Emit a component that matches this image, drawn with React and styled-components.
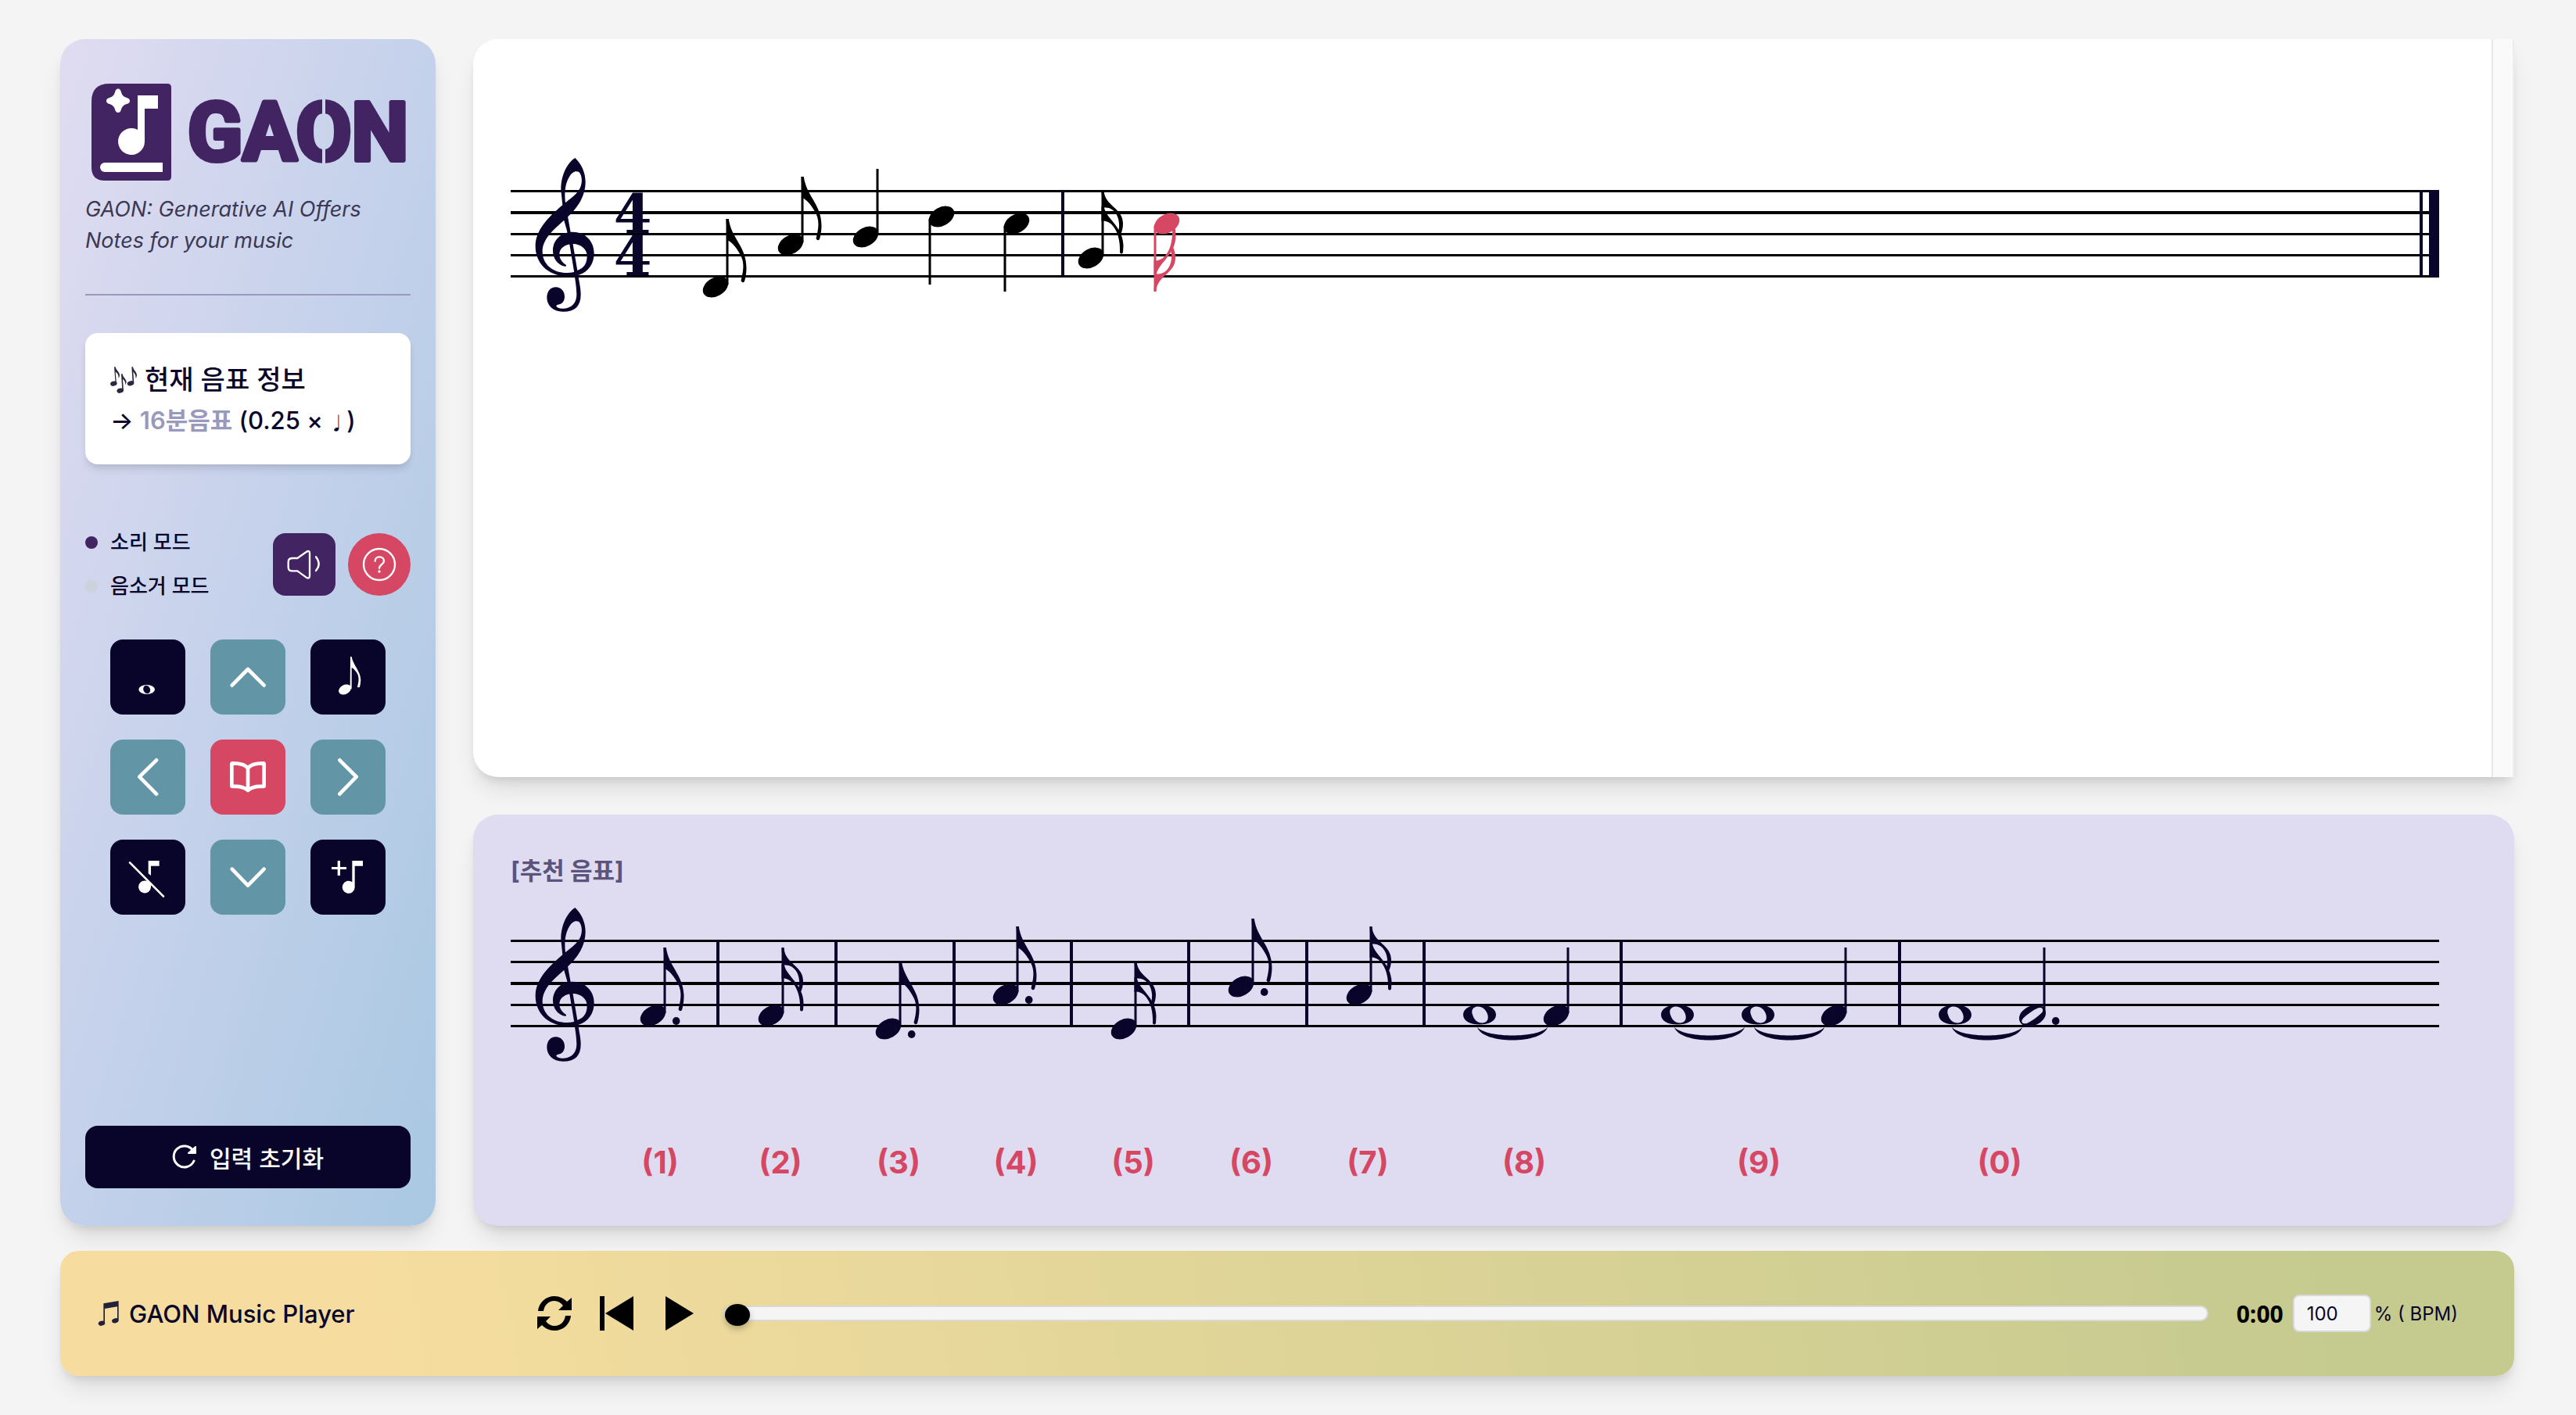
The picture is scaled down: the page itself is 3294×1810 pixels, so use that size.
import React, { useState } from "react";
import styled, { createGlobalStyle, css } from "styled-components";

const INK = "#09042a";
const PURPLE = "#432462";
const RED = "#d64763";
const TEAL = "#6296a7";

const scoreNotes = [
  { type: "eighth", x: 262, y: 122 },
  { type: "eighth", x: 358, y: 68 },
  { type: "quarter", x: 454, y: 58 },
  { type: "quarter", x: 551, y: 32, down: true },
  { type: "quarter", x: 647, y: 41, down: true },
  { type: "sixteenth", x: 742, y: 85 },
  { type: "sixteenth", x: 839, y: 41, down: true, color: RED },
];

const recommendations = [
  { key: 1, label: 191, bar: 265, notes: [{ type: "eighth", x: 182, y: 95, dot: true }] },
  { key: 2, label: 345, bar: 416, notes: [{ type: "sixteenth", x: 333, y: 95 }] },
  { key: 3, label: 496, bar: 567, notes: [{ type: "eighth", x: 483, y: 112, dot: true }] },
  { key: 4, label: 646, bar: 717, notes: [{ type: "eighth", x: 633, y: 68, dot: true }] },
  { key: 5, label: 796, bar: 867, notes: [{ type: "sixteenth", x: 784, y: 112 }] },
  { key: 6, label: 947, bar: 1018, notes: [{ type: "eighth", x: 934, y: 58, dot: true }] },
  { key: 7, label: 1096, bar: 1168, notes: [{ type: "sixteenth", x: 1085, y: 68 }] },
  {
    key: 8,
    label: 1296,
    bar: 1420,
    ties: [1237],
    notes: [
      { type: "whole", x: 1239, y: 95 },
      { type: "quarter", x: 1337, y: 95 },
    ],
  },
  {
    key: 9,
    label: 1596,
    bar: 1776,
    ties: [1489, 1591],
    notes: [
      { type: "whole", x: 1492, y: 95 },
      { type: "whole", x: 1595, y: 95 },
      { type: "quarter", x: 1692, y: 95 },
    ],
  },
  {
    key: 0,
    label: 1904,
    ties: [1844],
    notes: [
      { type: "whole", x: 1847, y: 95 },
      { type: "half", x: 1946, y: 95, dot: true },
    ],
  },
];

const StaffLines = ({ thick }) => (
  <g fill="#000">
    {[0, 27, 55, 82, 109].map((y, i) => (
      <rect key={y} x="0" y={i === thick && i === 2 ? 54 : y} width="2466" height={i === thick ? 4 : 3} />
    ))}
  </g>
);

const Clef = () => (
  <g transform="translate(-33 -63) scale(0.33333)" fill={INK}>
    <path
      fillRule="evenodd"
      d="M346 66C370 88 386 122 386 158C386 212 358 256 310 300C258 345 221 380 221 425C221 475 262 508 318 507C332 507 345 505 354 498C380 490 392 472 392 442C392 416 368 396 338 396C310 396 286 412 286 436C286 455 298 468 312 477Q313 483 306 482C278 476 261 450 261 422C261 378 296 350 336 350C386 350 419 386 419 432C419 478 388 514 345 518L310 519C240 518 194 468 194 405C194 345 240 296 298 247L292 190C291 130 318 84 346 66ZM309 238C304 200 309 165 322 142C335 116 356 112 365 125C376 145 373 172 359 192C345 211 328 222 309 238Z"
    />
    <path d="M302 300L318 290L329 352L338 398L355 498C362 545 368 565 368 590C368 635 345 656 300 656C260 656 238 630 238 602C238 578 252 562 272 562C292 562 306 578 306 598C306 616 296 626 286 628C276 630 272 633 275 637C280 643 290 645 302 644C335 642 352 620 352 590C352 560 344 520 342 500L325 398L315 345Z" />
  </g>
);

const Note = ({ type, x, y, down, dot, color = INK }) => {
  const flip = down ? "translate(-30 0) scale(1 -1)" : undefined;
  if (type === "whole") {
    return (
      <path
        transform={`translate(${x} ${y + 1})`}
        fill={color}
        fillRule="evenodd"
        d="M0 -12.5C12 -12.5 21 -8 21 0C21 8 12 12.5 0 12.5C-12 12.5 -21 8 -21 0C-21 -8 -12 -12.5 0 -12.5ZM-3 -10.5C-9 -10 -11 -5 -9 0C-7 7 -2 11 4 10.5C10 10 12 5 10 -1C8 -7 3 -11 -3 -10.5Z"
      />
    );
  }
  return (
    <g transform={`translate(${x} ${y + 2})`} fill={color}>
      {type === "half" ? (
        <path
          fillRule="evenodd"
          d="M4 -13.5C12 -14 17 -10 17 -3C17 6 5 14 -4 14C-12 14 -17 10 -17 4C-17 -6 -5 -13 4 -13.5ZM9 -10C3 -9 -12 2 -13.5 6C-14.5 10 -11 11 -7 10C0 7 11 -2 13 -5C14 -9 12 -10 9 -10Z"
        />
      ) : (
        <ellipse rx="17.5" ry="11.7" transform="rotate(-30)" />
      )}
      <g transform={flip}>
        <rect x="13.5" y="-87" width="3" height="84" />
        {type === "eighth" && (
          <path d="M13.5 -87H16.8C20 -62 39.5 -52 39.5 -24C39.5 -17 38 -11 37 -7Q34.500 -4 32.500 -8C37 -25 36.500 -34 30 -44C26 -51 21 -57 15 -60Z" />
        )}
        {type === "sixteenth" && (
          <>
            <path d="M13.5 -86H16.5C18 -66 41 -64 41 -44C41 -38 39.500 -33 37.500 -29L35 -34C39 -48 32 -65 18 -64.500L15 -64Z" />
            <path d="M13.5 -66L17 -64C20 -50 41 -40 41.500 -16L41 -7Q39 -4 37 -7C38 -25 32 -45 17 -47.500L13.5 -47Z" />
          </>
        )}
      </g>
      {dot && <ellipse cx="29.700" cy="7" rx="4.800" ry="5" />}
    </g>
  );
};

const Tie = ({ x }) => (
  <path
    fill={INK}
    d={`M${x - 1} 112C${x + 12} 126 ${x + 76} 126 ${x + 89} 112C${x + 82} 134 ${x + 6} 134 ${x - 1} 112Z`}
  />
);

const Logo = () => (
  <LogoArt viewBox="0 0 416 150" role="img" aria-label="GAON">
    <path
      fill={PURPLE}
      d="M31 9H105Q110 9 110 14V128Q110 133 105 133H25Q8 133 8 116V32Q8 9 31 9Z"
    />
    <path
      fill="#fff"
      d="M42 15.500Q45 15.500 46 20Q47.500 25.500 53 27Q57 28 57 31Q57 34 53 35Q47.500 36.500 46 42Q45 46 42 46Q39 46 38 42Q36.500 36.500 31 35Q27 34 27 31Q27 28 31 27Q36.500 25.500 38 20Q39 15.500 42 15.500Z"
    />
    <path fill="#fff" d="M67 24H93V41H76V83A17 17 0 1 1 67 68Z" />
    <path fill="#fff" d="M25 110H99V122H25A6 6 0 0 1 25 110Z" />
    <LogoText x="131" y="107">
      GAON
    </LogoText>
    <rect x="303" y="24" width="4" height="90" fill="#ccd6eb" />
  </LogoArt>
);

const TripleNoteIcon = () => (
  <svg width="34" height="34" viewBox="0 0 102 102" fill="#2b2940" aria-hidden="true">
    <ellipse cx="13" cy="65" rx="13" ry="9" transform="rotate(-15 13 65)" />
    <path d="M15 1H20C22 14 34 18 36 32Q36 38 32 44Q32 26 20 20L24 65H20Z" />
    <ellipse cx="38" cy="92" rx="13" ry="9" transform="rotate(-15 38 92)" />
    <path d="M42 28H47C49 42 60 46 62 58Q62 64 58 70Q58 54 48 48L51 92H46Z" />
    <ellipse cx="78" cy="64" rx="13" ry="9" transform="rotate(-15 78 64)" />
    <path d="M82 1H87C89 14 100 18 102 32Q102 38 98 46Q98 28 88 20L91 64H86Z" />
  </svg>
);

const BeamedNoteIcon = () => (
  <svg width="28" height="32" viewBox="0 0 84 96" fill="#23203c" aria-hidden="true">
    <path d="M22 10L80 0V74H75V22L27 30V86H22Z" />
    <ellipse cx="15" cy="86" rx="13" ry="9" transform="rotate(-15 15 86)" />
    <ellipse cx="67" cy="76" rx="13" ry="9" transform="rotate(-15 67 76)" />
  </svg>
);

const icons = {
  whole: (
    <g stroke="none">
      <ellipse cx="140" cy="192" rx="31" ry="18" fill="#fff" />
      <ellipse cx="140" cy="192" rx="13" ry="16" transform="rotate(-25 140 192)" fill={INK} />
    </g>
  ),
  up: <polyline points="83,176 144,114 206,176" />,
  eighth: (
    <g fill="#fff" stroke="none">
      <ellipse cx="132" cy="192" rx="25" ry="18" transform="rotate(-28 132 192)" />
      <path d="M153 66H158C162 96 193 122 193 157Q192 172 189 182Q184 186 180 182C187 156 187 140 175 124Q168 113 158 107V190H152Z" />
    </g>
  ),
  left: <polyline points="177,79 112,143 177,209" />,
  book: (
    <path d="M144 110C134 95 112 91 85 91Q82 91 82 95V177Q82 180 85 180C112 178 132 184 144 195C156 184 176 178 203 180Q206 180 206 177V95Q206 91 203 91C176 91 154 95 144 110V192" />
  ),
  right: <polyline points="112,79 176,143 112,209" />,
  mute: (
    <>
      <g fill="#fff" stroke="none">
        <path d="M146 81H188V101H156V138L146 130Z" />
        <path d="M156 182A24 24 0 1 1 143 160L156 172Z" />
      </g>
      <line x1="75" y1="88" x2="204" y2="218" strokeWidth="8" />
    </>
  ),
  down: <polyline points="83,113 144,176 206,113" />,
  add: (
    <g fill="#fff" stroke="none">
      <path d="M104 81H114V105H138V114H114V138H104V114H81V105H104Z" />
      <path d="M160 81H201V101H170V182A24 24 0 1 1 160 163Z" />
    </g>
  ),
};

const keypad = [
  { icon: "whole", tone: INK, name: "온음표" },
  { icon: "up", tone: TEAL, name: "위로" },
  { icon: "eighth", tone: INK, name: "8분음표" },
  { icon: "left", tone: TEAL, name: "왼쪽" },
  { icon: "book", tone: RED, name: "악보" },
  { icon: "right", tone: TEAL, name: "오른쪽" },
  { icon: "mute", tone: INK, name: "음표 삭제" },
  { icon: "down", tone: TEAL, name: "아래로" },
  { icon: "add", tone: INK, name: "음표 추가" },
];

const Sidebar = () => (
  <SidePanel>
    <header>
      <Logo />
      <Tagline>GAON: Generative AI Offers Notes for your music</Tagline>
    </header>
    <Divider />
    <InfoCard>
      <InfoTitle>
        <TripleNoteIcon />
        현재 음표 정보
      </InfoTitle>
      <InfoText>
        → <strong>16분음표</strong> (0.25 × <small>♩</small>)
      </InfoText>
    </InfoCard>
    <ModeRow>
      <ModeList>
        <Mode $active>소리 모드</Mode>
        <Mode>음소거 모드</Mode>
      </ModeList>
      <RoundButtons>
        <ToolButton type="button" $tone={PURPLE} aria-label="소리">
          <svg viewBox="0 0 240 240" strokeWidth="7">
            <path d="M94 96L128 72Q141 64 141 77V163Q141 177 128 170L94 145H75Q59 145 59 131V110Q59 96 75 96Z" />
            <path d="M165 91Q187 119 165 144" />
          </svg>
        </ToolButton>
        <ToolButton type="button" $tone={RED} $round aria-label="도움말">
          <svg viewBox="0 0 240 240" strokeWidth="7">
            <circle cx="120" cy="120" r="60" />
            <path d="M104 107C104 97 111 91 120 91C131 91 138 98 138 107C138 119 120 121 120 134" />
            <circle cx="120" cy="147" r="5" fill="#fff" stroke="none" />
          </svg>
        </ToolButton>
      </RoundButtons>
    </ModeRow>
    <Keypad>
      {keypad.map((item) => (
        <KeyButton key={item.icon} type="button" $tone={item.tone} aria-label={item.name}>
          <svg viewBox="0 0 288 288" strokeWidth="14">
            {icons[item.icon]}
          </svg>
        </KeyButton>
      ))}
    </Keypad>
    <ResetButton type="button">
      <svg width="32" height="32" viewBox="0 0 32 32" fill="none" stroke="#fff" strokeWidth="3" strokeLinecap="round" aria-hidden="true">
        <path d="M28 21A13.500 13.500 0 1 1 27 8" />
        <path d="M30 3V11H21Z" fill="#fff" strokeWidth="2" strokeLinejoin="round" />
      </svg>
      입력 초기화
    </ResetButton>
  </SidePanel>
);

const Score = () => (
  <ScorePanel>
    <ScoreBody>
      <Sheet viewBox="0 0 2466 360" role="img" aria-label="악보">
        <g transform="translate(0 145)">
          <StaffLines thick={1} />
          <Clef />
          <TimeSignature>
            <tspan x="156" y="55">4</tspan>
            <tspan x="156" y="109">4</tspan>
          </TimeSignature>
          {scoreNotes.map((note) => (
            <Note key={note.x} color="#000" {...note} />
          ))}
          <rect x="704" y="1" width="4" height="109" fill={INK} />
          <rect x="2441" y="0" width="4" height="111" fill={INK} />
          <rect x="2453" y="0" width="13" height="111" fill={INK} />
        </g>
      </Sheet>
    </ScoreBody>
    <ScrollTrack />
  </ScorePanel>
);

const Recommend = () => (
  <RecommendPanel>
    <RecommendTitle>[추천 음표]</RecommendTitle>
    <Sheet viewBox="0 0 2466 382" role="img" aria-label="추천 음표">
      <g transform="translate(0 64)">
        <StaffLines thick={2} />
        <Clef />
        {recommendations.map((item) => (
          <g key={item.key}>
            {item.notes.map((note) => (
              <Note key={note.x} {...note} />
            ))}
            {item.ties && item.ties.map((x) => <Tie key={x} x={x} />)}
            {item.bar && <rect x={item.bar - 2} y="1" width="4" height="109" fill={INK} />}
            <NoteLabel x={item.label} y="299">
              ({item.key})
            </NoteLabel>
          </g>
        ))}
      </g>
    </Sheet>
  </RecommendPanel>
);

const Player = () => {
  const [position, setPosition] = useState(0);
  const [tempo, setTempo] = useState("100");

  return (
    <PlayerBar>
      <PlayerTitle>
        <BeamedNoteIcon />
        GAON Music Player
      </PlayerTitle>
      <PlayerButton type="button" aria-label="반복">
        <svg width="46" height="46" viewBox="0 0 46 46">
          <path d="M2 20C3 9 12 1 23 1C30 1 35 4 39 8L45 3V19H28L34 13C31 9 27 7 23 7C15 7 10 13 9 20Z" />
          <path d="M44 26C43 37 34 45 23 45C16 45 11 42 7 38L1 43V27H18L12 33C15 37 19 39 23 39C31 39 36 33 37 26Z" />
        </svg>
      </PlayerButton>
      <PlayerButton type="button" aria-label="처음으로">
        <svg width="44" height="44" viewBox="0 0 44 44">
          <path d="M0 0H6V44H0ZM43 0V44L7 22Z" />
        </svg>
      </PlayerButton>
      <PlayerButton type="button" aria-label="재생">
        <svg width="36" height="44" viewBox="0 0 36 44">
          <path d="M0 0L36 22L0 44Z" />
        </svg>
      </PlayerButton>
      <Progress
        type="range"
        min="0"
        max="100"
        value={position}
        onChange={(e) => setPosition(Number(e.target.value))}
        aria-label="재생 위치"
      />
      <Clock>0:00</Clock>
      <TempoLabel>
        <TempoInput value={tempo} onChange={(e) => setTempo(e.target.value)} />
        % ( BPM)
      </TempoLabel>
    </PlayerBar>
  );
};

const App = () => (
  <>
    <GlobalStyle />
    <Page>
      <Workspace>
        <Sidebar />
        <Content>
          <Score />
          <Recommend />
        </Content>
      </Workspace>
      <Player />
    </Page>
  </>
);

const GlobalStyle = createGlobalStyle`
  * {
    box-sizing: border-box;
    margin: 0;
    padding: 0;
  }
  body {
    background-color: #f4f4f4;
    color: ${INK};
    font-family: Inter, "Noto Sans CJK KR", sans-serif;
  }
  button, input {
    font: inherit;
    color: inherit;
    border: none;
  }
  button {
    cursor: pointer;
  }
`;

const panelShadow = css`
  box-shadow: 0 20px 30px -6px rgba(0, 0, 0, 0.1), 0 8px 12px -4px rgba(0, 0, 0, 0.1);
`;

const Page = styled.div`
  display: flex;
  flex-direction: column;
  gap: 32px;
  min-height: 100vh;
  padding: 50px 79px 50px 77px;
`;

const Workspace = styled.main`
  flex: 1;
  display: flex;
  gap: 48px;
`;

const SidePanel = styled.aside`
  flex: 0 0 480px;
  display: flex;
  flex-direction: column;
  padding: 48px 32px;
  border-radius: 32px;
  background: linear-gradient(to bottom right, #e0dcf1, #c4d1eb 50%, #a9c8e2);
  ${panelShadow}
`;

const LogoArt = styled.svg`
  display: block;
  width: 100%;
`;

const LogoText = styled.text`
  font-family: Roboto, sans-serif;
  font-size: 103px;
  font-weight: 700;
  fill: ${PURPLE};
  stroke: ${PURPLE};
  stroke-width: 6px;
  stroke-linejoin: round;
`;

const Tagline = styled.p`
  font-size: 27px;
  line-height: 40px;
  font-style: italic;
  color: #3b3853;
`;

const Divider = styled.hr`
  margin: 48px 0;
  border: none;
  border-top: 2px solid #9999bd;
`;

const InfoCard = styled.section`
  padding: 32px;
  border-radius: 16px;
  background-color: #fff;
  box-shadow: 0 8px 12px -2px rgba(0, 0, 0, 0.1), 0 4px 8px -4px rgba(0, 0, 0, 0.1);
`;

const InfoTitle = styled.h2`
  display: flex;
  align-items: center;
  gap: 10px;
  font-size: 34px;
  line-height: 56px;
  font-weight: 500;
`;

const InfoText = styled.p`
  font-size: 31px;
  line-height: 48px;
  font-weight: 500;
  white-space: nowrap;
  strong {
    font-weight: 600;
    color: #9999bd;
  }
  small {
    font-size: 22px;
    line-height: 1;
  }
`;

const ModeRow = styled.div`
  display: flex;
  align-items: center;
  justify-content: space-between;
  margin-top: 80px;
`;

const ModeList = styled.ul`
  display: flex;
  flex-direction: column;
  gap: 16px;
  list-style: none;
`;

const Mode = styled.li`
  display: flex;
  align-items: center;
  gap: 16px;
  font-size: 26px;
  line-height: 40px;
  font-weight: 500;
  &::before {
    content: "";
    width: 16px;
    height: 16px;
    border-radius: 50%;
    background-color: ${({ $active }) => ($active ? PURPLE : "#cdd3dc")};
  }
`;

const RoundButtons = styled.div`
  display: flex;
  gap: 16px;
`;

const ToolButton = styled.button`
  width: 80px;
  height: 80px;
  border-radius: ${({ $round }) => ($round ? "50%" : "16px")};
  background-color: ${({ $tone }) => $tone};
  svg {
    display: block;
    width: 100%;
    fill: none;
    stroke: #fff;
    stroke-linecap: round;
    stroke-linejoin: round;
  }
`;

const Keypad = styled.div`
  display: grid;
  grid-template-columns: repeat(3, 96px);
  justify-content: center;
  gap: 32px;
  margin-top: 48px;
`;

const KeyButton = styled(ToolButton)`
  width: 96px;
  height: 96px;
`;

const ResetButton = styled.button`
  display: flex;
  align-items: center;
  justify-content: center;
  gap: 16px;
  height: 80px;
  margin-top: auto;
  border-radius: 16px;
  background-color: ${INK};
  color: #fff;
  font-size: 30px;
  font-weight: 500;
`;

const Content = styled.div`
  flex: 1;
  min-width: 0;
  display: flex;
  flex-direction: column;
  gap: 48px;
`;

const ScorePanel = styled.section`
  flex: 1;
  display: flex;
  border-radius: 32px 0 0 32px;
  background-color: #fff;
  overflow: hidden;
  ${panelShadow}
`;

const ScoreBody = styled.div`
  flex: 1;
  padding: 48px 67px 48px 48px;
`;

const ScrollTrack = styled.div`
  flex: 0 0 29px;
  border: solid #e8e8e8;
  border-width: 0 2px;
  border-right-color: #ededed;
  background-color: #fafafa;
`;

const Sheet = styled.svg`
  display: block;
  width: 100%;
`;

const TimeSignature = styled.text`
  font-family: "DejaVu Serif", serif;
  font-size: 70px;
  font-weight: 700;
  fill: ${INK};
  text-anchor: middle;
`;

const RecommendPanel = styled.section`
  padding: 48px 96px 48px 48px;
  border-radius: 32px;
  background-color: #dfdcf1;
  ${panelShadow}
`;

const RecommendTitle = styled.h2`
  font-size: 31px;
  line-height: 48px;
  font-weight: 700;
  color: #5b557d;
`;

const NoteLabel = styled.text`
  font-size: 40px;
  font-weight: 700;
  fill: ${RED};
  text-anchor: middle;
`;

const PlayerBar = styled.footer`
  display: flex;
  align-items: center;
  height: 160px;
  padding: 0 72px 0 48px;
  border-radius: 24px;
  background: linear-gradient(80deg, #f6dd9f 12%, #c5ca8f 92%);
  ${panelShadow}
`;

const PlayerTitle = styled.h2`
  flex: 0 0 544px;
  display: flex;
  align-items: center;
  gap: 12px;
  font-size: 31px;
  font-weight: 500;
`;

const PlayerButton = styled.button`
  width: 80px;
  height: 80px;
  display: flex;
  align-items: center;
  justify-content: center;
  background: none;
  fill: #000;
`;

const Progress = styled.input`
  flex: 1;
  min-width: 0;
  height: 28px;
  margin: 0 36px 0 16px;
  appearance: none;
  background: none;
  &::-webkit-slider-runnable-track {
    height: 20px;
    border: 2px solid #d9d9d9;
    border-radius: 10px;
    background-color: #f5f5f5;
  }
  &::-webkit-slider-thumb {
    appearance: none;
    width: 32px;
    height: 28px;
    margin-top: -4px;
    border-radius: 50%;
    background-color: #000;
    box-shadow: 0 4px 8px rgba(0, 0, 0, 0.25);
  }
`;

const Clock = styled.span`
  margin-right: 12px;
  font-family: "Open Sans", sans-serif;
  font-size: 30px;
  font-weight: 700;
  color: #000;
`;

const TempoLabel = styled.label`
  display: flex;
  align-items: center;
  gap: 4px;
  font-size: 24px;
`;

const TempoInput = styled.input`
  width: 100px;
  height: 48px;
  padding: 0 16px;
  border: 2px solid #d9d9d9;
  border-radius: 8px;
  background-color: #f5f5f5;
`;

export default App;
